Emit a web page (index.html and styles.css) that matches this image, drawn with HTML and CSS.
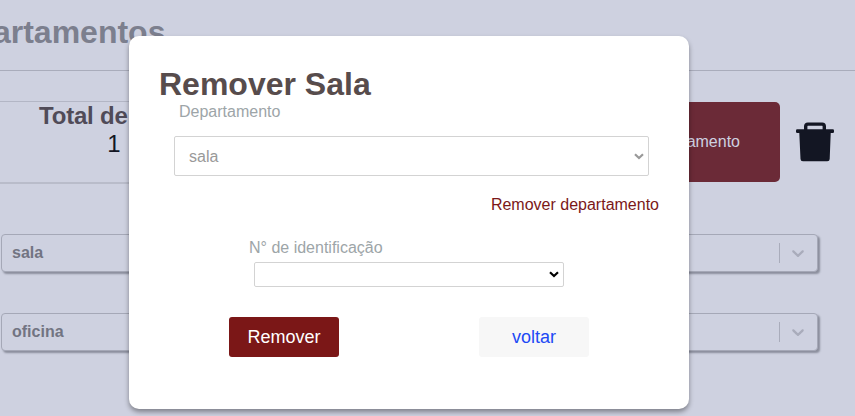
FILE: index.html
```html
<!DOCTYPE html>
<html lang="pt-BR">
<head>
<meta charset="utf-8">
<title>Departamentos</title>
<link rel="stylesheet" href="styles.css">
</head>
<body>
<main class="page">
  <header class="page-header"><h1>Departamentos</h1></header>
  <section class="summary">
    <div class="total">
      <h2>Total de</h2>
      <p>1</p>
    </div>
    <div class="actions">
      <button class="department-button">Departamento</button>
      <svg class="trash" viewBox="0 0 38 40" width="38" height="40">
        <path d="M9.700 9V4.200Q9.700 2.100 11.800 2.100H26.200Q28.300 2.100 28.300 4.200V9" fill="none" stroke="#131623" stroke-width="3.400"/>
        <rect y="7.200" width="38" height="3.800" rx="1.200" fill="#131623"/>
        <path d="M3.200 9h31.600l-1.100 28q-.1 2.300-2.400 2.300H6.900q-2.300 0-2.400-2.300z" fill="#131623"/>
      </svg>
    </div>
  </section>
  <div class="rooms">
    <div class="room"><span>sala</span><i class="separator"></i><svg viewBox="0 0 20 20" width="20" height="20"><path d="M4.516 7.548c.436-.446 1.043-.481 1.576 0L10 11.295l3.908-3.747c.533-.481 1.141-.446 1.574 0 .436.445.408 1.197 0 1.615-.406.418-4.695 4.502-4.695 4.502a1.095 1.095 0 0 1-1.576 0S4.924 9.581 4.516 9.163s-.436-1.170 0-1.615z"/></svg></div>
    <div class="room"><span>oficina</span><i class="separator"></i><svg viewBox="0 0 20 20" width="20" height="20"><path d="M4.516 7.548c.436-.446 1.043-.481 1.576 0L10 11.295l3.908-3.747c.533-.481 1.141-.446 1.574 0 .436.445.408 1.197 0 1.615-.406.418-4.695 4.502-4.695 4.502a1.095 1.095 0 0 1-1.576 0S4.924 9.581 4.516 9.163s-.436-1.170 0-1.615z"/></svg></div>
  </div>
</main>
<div class="overlay">
  <form class="modal">
    <h2 class="modal-title">Remover Sala</h2>
    <label class="label" for="department">Departamento</label>
    <div class="select-wrap department">
      <select id="department"><option>sala</option></select>
      <svg viewBox="0 0 10 7" width="10" height="7"><path d="M1 1.200L5 5l4-3.800"/></svg>
    </div>
    <a class="remove-link">Remover departamento</a>
    <label class="label number-label" for="number">N° de identificação</label>
    <div class="select-wrap number">
      <select id="number"></select>
      <svg viewBox="0 0 10 7" width="10" height="7"><path d="M1 1.200L5 5l4-3.800"/></svg>
    </div>
    <div class="buttons">
      <button type="button" class="button primary">Remover</button>
      <button type="button" class="button back">voltar</button>
    </div>
  </form>
</div>
</body>
</html>
```
FILE: styles.css
```css
* { box-sizing: border-box; }
body {
  margin: 0;
  height: 416px;
  overflow: hidden;
  background: #ced1e0;
  font-family: "Liberation Sans", Arial, sans-serif;
}
h1, h2, p { margin: 0; }
button, select { font-family: inherit; }
.page { width: 855px; }
.page-header {
  height: 71px;
  padding-top: 14px;
  border-bottom: 1px solid #a9acbb;
}
.page-header h1 {
  margin-left: -67.5px;
  font-size: 32px;
  line-height: 36px;
  color: #7c7f8e;
}
.summary {
  display: flex;
  height: 83px;
  margin-top: 30px;
}
.total {
  width: 228px;
  height: 83px;
  border-top: 1px solid #b3b6c5;
  border-bottom: 2px solid #b9bcca;
}
.total h2 {
  margin-left: 39px;
  font-size: 24px;
  line-height: 28px;
  letter-spacing: -0.2px;
  color: #504b58;
}
.total p {
  font-size: 24px;
  line-height: 28px;
  text-align: center;
  color: #131623;
}
.actions {
  display: flex;
  align-items: center;
  height: 80px;
  margin: 1px 0 0 372px;
}
.department-button {
  width: 180px;
  height: 80px;
  padding: 0 40px 0 0;
  border: 0;
  border-radius: 5px;
  background: #6b2a37;
  color: #ced1e0;
  font-size: 16px;
  text-align: right;
}
.trash { margin-left: 16px; }
.rooms {
  display: grid;
  gap: 41px;
  width: 817px;
  margin: 50px 0 0 1px;
}
.room {
  display: flex;
  align-items: center;
  height: 38px;
  padding: 0 9px 0 10px;
  border: 1px solid #a5a8b7;
  border-radius: 4px;
  box-shadow: 2px 2px 2px #8b8e9c;
  background: #ced1e0;
  font-size: 16px;
  font-weight: bold;
}
.room span { flex: 1; color: #727482; }
.separator { width: 1px; height: 20px; margin-right: 8px; background: #a9acbb; }
.room svg { fill: #a9acbb; }
.overlay {
  position: absolute;
  inset: 0;
  display: flex;
  padding: 36px 0 0 129px;
}
.modal {
  display: flex;
  flex-direction: column;
  width: 560px;
  height: 373px;
  padding: 30px;
  border-radius: 10px;
  background: #fff;
  box-shadow: 0 3px 5px rgba(0, 0, 0, .38);
}
.modal-title {
  font-size: 32px;
  line-height: 36px;
  color: #574c4c;
}
.label {
  margin-left: 20px;
  font-size: 16px;
  line-height: 19px;
  color: #9da5a8;
}
.select-wrap { display: grid; align-items: center; }
.select-wrap > * { grid-area: 1 / 1; }
.select-wrap select {
  width: 100%;
  height: 100%;
  appearance: none;
  border: 1px solid #d3d3d3;
  border-radius: 2px;
  background: #fff;
  color: #999;
  font-size: 16px;
}
.select-wrap svg {
  justify-self: end;
  margin-right: 5px;
  fill: none;
  stroke-width: 2.2;
  pointer-events: none;
}
.department { width: 475px; height: 40px; margin: 15px 0 0 15px; }
.department select { padding: 0 14px; }
.department svg { stroke: #999; }
.remove-link {
  align-self: flex-end;
  margin-top: 19px;
  font-size: 16px;
  line-height: 19px;
  color: #7b1818;
}
.number-label { margin: 24px 0 0 90px; }
.number { width: 310px; height: 25px; margin: 5px 0 0 95px; }
.number svg { stroke: #000; }
.buttons { display: flex; gap: 140px; margin: 30px 0 0 70px; }
.button {
  width: 110px;
  height: 40px;
  padding: 0;
  border: 0;
  border-radius: 3px;
  font-size: 18px;
}
.primary { background: #7b1717; color: #fff; }
.back { background: #f7f7f7; color: #2049f5; }
```
